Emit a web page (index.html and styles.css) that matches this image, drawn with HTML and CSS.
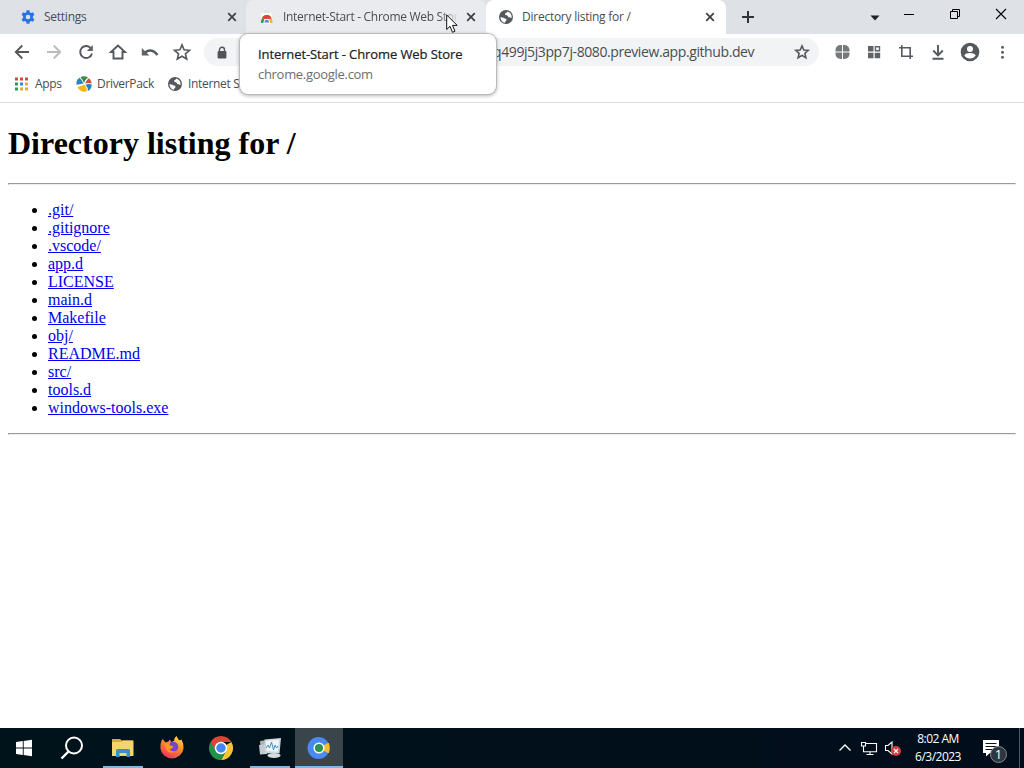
FILE: index.html
```html
<!DOCTYPE html>
<html lang="en">
<head>
    <meta charset="UTF-8">
    <title>Directory listing for /</title>
    <link rel="stylesheet" href="styles.css">
</head>
<body>
    <!-- Tabs -->
    <div class="tab-strip">
        <div class="tab">
            <svg class="favicon" viewBox="0 0 16 16"><path d="M6.600 1.300h2.800l.4 2 1.200.7 1.900-.7 1.500 2.500-1.500 1.400v1.700l1.500 1.400-1.500 2.500-1.900-.7-1.200.7-.4 2H6.600l-.4-2-1.200-.7-1.900.7-1.500-2.500 1.500-1.400V7.200L1.600 5.800l1.500-2.500 1.900.7 1.200-.7z" fill="#2673e6"/><circle cx="8" cy="8" r="2.300" fill="#dee1e6"/></svg>
            <span class="tab-title settings-title">Settings</span>
            <svg class="tab-close" viewBox="0 0 16 16"><path d="M4.200 4.200l7.600 7.600M11.800 4.200l-7.600 7.600"/></svg>
        </div>
        <div class="tab hovered">
            <svg class="favicon" viewBox="0 0 16 16"><path d="M3 4h11v10H3z" fill="#f8f8f8"/><path d="M6.500 4V2h4v2" fill="none" stroke="#dcdcdc"/><path d="M4 9.500q1-3.500 4.800-3.500 3.700 0 4.700 3.500z" fill="#dc4437"/><path d="M3.800 9.500q-1 2-.8 4.500h4.500L6 10z" fill="#2f9e57"/><path d="M13.700 9.500q.9 2 .8 4.500H10l1.500-4z" fill="#f2b82d"/><path d="M4 9.500q1-3.500 4.800-3.500 3.700 0 4.700 3.500L9 10z" fill="#dc4437"/><path d="M5.800 14a3 3.700 0 0 1 6 0z" fill="#4986df" stroke="#fff"/></svg>
            <span class="tab-title store-title">Internet-Start - Chrome Web Store</span>
            <svg class="tab-close" viewBox="0 0 16 16"><path d="M4.200 4.200l7.600 7.600M11.800 4.200l-7.600 7.600"/></svg>
        </div>
        <div class="tab active">
            <svg class="favicon" viewBox="0 0 16 16"><circle cx="8" cy="8" r="7" fill="#55585c"/><path d="M2.400 8.200q2.500 0 3.500.8t2.400.6v2.200q-1.300.6-1.300 1.900-4.300-.6-4.600-5.500zM9 2.400q-.2 1.900-2 2.100-.3 2 2 1.800 1.400.9 1.300 2h1.800q.4 1 1.400.7.800-5-4.500-6.600z" fill="#fff"/></svg>
            <span class="tab-title listing-title">Directory listing for /</span>
            <svg class="tab-close" viewBox="0 0 16 16"><path d="M4.200 4.200l7.600 7.600M11.800 4.200l-7.600 7.600"/></svg>
        </div>
        <svg class="new-tab" viewBox="0 0 16 16"><path d="M8 2v12M2 8h12" stroke="#303236" stroke-width="2"/></svg>
        <div class="window-buttons">
            <svg class="tab-search" viewBox="0 0 10 6"><path d="M.5.500h9L5 5.500z" fill="#202124"/></svg>
            <svg class="win-button" viewBox="0 0 46 28"><path d="M18 14.500h10" stroke="#000"/></svg>
            <svg class="win-button" viewBox="0 0 46 28"><path d="M18.500 11.500h7v7h-7zM20.500 11.500v-2h7v7h-2" fill="none" stroke="#000"/></svg>
            <svg class="win-button" viewBox="0 0 46 28"><path d="M18 9l10 10M28 9L18 19" stroke="#000" stroke-width="1.100"/></svg>
        </div>
    </div>

    <!-- Toolbar -->
    <div class="toolbar">
        <svg class="tool" viewBox="0 0 32 32"><path d="M23 16H10M16.300 9.500L9.800 16l6.500 6.500" class="line"/></svg>
        <svg class="tool disabled" viewBox="0 0 32 32"><path d="M9 16h13M15.700 9.500l6.500 6.500-6.500 6.500" class="line"/></svg>
        <svg class="tool" viewBox="0 0 32 32"><path d="M21.200 12.700A6 6 0 1 0 22 17.500" class="line"/><path d="M22.800 9v6h-6z" class="fill"/></svg>
        <svg class="tool" viewBox="0 0 32 32"><path d="M16 9.500l-7 6.500h2.500v6.500h9V16H23z" class="line"/></svg>
        <svg class="tool" viewBox="0 0 32 32"><path d="M11 16.500q6.500-4.800 12.500 2.500" class="line thick"/><path d="M7.800 12v7.500h7.500z" class="fill"/></svg>
        <svg class="tool" viewBox="0 0 32 32"><path d="M16 8.900l2.100 4.900 5.400.5-4.100 3.500 1.300 5.200-4.700-2.800-4.700 2.800 1.300-5.200-4.100-3.500 5.400-.5z" class="line thin"/></svg>
        <div class="omnibox">
            <svg class="lock" viewBox="0 0 10 13"><path d="M2.500 6V3.700a2.500 2.500 0 0 1 5 0V6" fill="none" stroke="#505357" stroke-width="1.400"/><rect x=".6" y="5" width="8.800" height="7.500" rx="1" fill="#505357"/></svg>
            <span class="url">q499j5j3pp7j-8080.preview.app.github.dev</span>
            <svg class="bookmark-star" viewBox="0 0 32 32"><path d="M16 9.900l1.800 4.100 4.400.4-3.300 3 1 4.400-3.900-2.400-3.900 2.400 1-4.400-3.300-3 4.400-.4z" class="line thin"/></svg>
        </div>
        <svg class="tool" viewBox="0 0 32 32"><rect x="9.500" y="9" width="14" height="14" rx="5" fill="#77787a"/><path d="M16.500 8v16M8 16h17" stroke="#fff" stroke-width="1"/></svg>
        <svg class="tool" viewBox="0 0 32 32"><path d="M10 10h5.500v5.500H10zM10 16.700h5.500v5.500H10zM16.700 16.700h5.500v5.500h-5.500z" class="fill"/><path d="M17.400 10.700h4.100v4.100h-4.100z" fill="none" stroke="#5f6368" stroke-width="1.400"/></svg>
        <svg class="tool" viewBox="0 0 32 32"><path d="M9 11.800h11.200v8.500M11.800 9v11.200H23M20.200 20v3" class="line thin"/></svg>
        <svg class="tool" viewBox="0 0 32 32"><path d="M16 9v10M11.200 14.500L16 19.300l4.800-4.800M10.500 22.700h11" class="line"/></svg>
        <svg class="tool" viewBox="0 0 32 32"><circle cx="16" cy="16" r="9.300" fill="#55585c"/><circle cx="16" cy="13" r="3" fill="#fff"/><path d="M10.300 19.400q1.500-2.300 5.700-2.300t5.700 2.300q-2 3-5.700 3t-5.700-3z" fill="#fff"/></svg>
        <svg class="tool" viewBox="0 0 32 32"><g class="fill"><circle cx="16.500" cy="11.300" r="1.500"/><circle cx="16.500" cy="16.300" r="1.500"/><circle cx="16.500" cy="21.300" r="1.500"/></g></svg>
    </div>

    <!-- Bookmarks -->
    <div class="bookmarks-bar">
        <div class="bookmark apps">
            <svg viewBox="0 0 14 14" width="14" height="14"><path d="M1 .500h3v3H1zM6 .500h3v3H6zM11 .500h3v3h-3z" fill="#d34a3d"/><path d="M1 5.500h3v3H1z" fill="#2f9b55"/><path d="M6 5.500h3v3H6z" fill="#3d83dc"/><path d="M11 5.500h3v3h-3z" fill="#dfae35"/><path d="M1 10.500h3v3H1z" fill="#2f9b55"/><path d="M6 10.500h3v3H6zM11 10.500h3v3h-3z" fill="#dfae35"/></svg>
            <span>Apps</span>
        </div>
        <div class="bookmark driverpack">
            <svg viewBox="0 0 16 16" width="16" height="16"><path d="M7.500 7.500L.6 8.800Q-.2 3.800 3.500 1.800 6 4 7.500 7.500z" fill="#3080c4"/><path d="M8 7Q6.500 3.500 4.500 1.300 8-.8 12 1.500 9 3.500 8 7z" fill="#3b8b42"/><path d="M9 7.500q1-3.500 4-5.300Q15.500 4 15.800 7.500 12 6.300 9 7.500z" fill="#d54d38"/><path d="M9.500 8.800q3-1.300 6.300-.3-.2 4.500-4 6.600.5-3.500-2.300-6.300z" fill="#2b80bd"/><path d="M8.200 8.600q3.300 3.200 2.300 6.900-6 1.500-9.200-4.500 3.500-.3 6.900-2.400z" fill="#f4b90c"/></svg>
            <span>DriverPack</span>
        </div>
        <div class="bookmark internet">
            <svg viewBox="0 0 16 16" width="16" height="16"><circle cx="8" cy="8" r="7" fill="#55585c"/><path d="M2.400 8.200q2.500 0 3.500.8t2.400.6v2.200q-1.300.6-1.300 1.900-4.300-.6-4.600-5.500zM9 2.400q-.2 1.900-2 2.100-.3 2 2 1.800 1.400.9 1.300 2h1.800q.4 1 1.400.7.800-5-4.500-6.600z" fill="#fff"/></svg>
            <span>Internet S</span>
        </div>
    </div>

    <!-- Page -->
    <main class="page">
        <h1>Directory listing for /</h1>
        <hr>
        <ul>
            <li><a href="#">.git/</a></li>
            <li><a href="#">.gitignore</a></li>
            <li><a href="#">.vscode/</a></li>
            <li><a href="#">app.d</a></li>
            <li><a href="#">LICENSE</a></li>
            <li><a href="#">main.d</a></li>
            <li><a href="#">Makefile</a></li>
            <li><a href="#">obj/</a></li>
            <li><a href="#">README.md</a></li>
            <li><a href="#">src/</a></li>
            <li><a href="#">tools.d</a></li>
            <li><a href="#">windows-tools.exe</a></li>
        </ul>
        <hr>
    </main>

    <!-- Taskbar -->
    <div class="taskbar">
        <div class="task"><svg viewBox="0 0 48 40"><path d="M16 14l6.800-1v6.500H16zM23.700 12.900L32 11.700v7.800h-8.300zM16 20.400h6.800V27L16 26zM23.700 20.400H32v7.900l-8.300-1.200z" fill="#fff"/></svg></div>
        <div class="task search"><svg viewBox="0 0 48 40"><circle cx="26" cy="17.500" r="8" fill="none" stroke="#fff" stroke-width="2"/><path d="M20.500 23.500l-7 7" stroke="#fff" stroke-width="2.400"/></svg></div>
        <div class="task running"><svg viewBox="0 0 48 40"><path d="M13 11h8l2 1.500h10.500V27H13z" fill="#dfa83c"/><path d="M13 14h9l2-1.500h10.500V28H13z" fill="#f5d36d"/><path d="M17 29v-6.500q0-1.500 1.500-1.500h11q1.500 0 1.500 1.500V29h-3.500v-4h-7v4z" fill="#3c8fc4"/></svg></div>
        <div class="task">
            <svg viewBox="0 0 48 40">
                <defs><linearGradient id="fox" x1=".8" y1="0" x2=".3" y2="1"><stop offset="0" stop-color="#ffe14a"/><stop offset=".45" stop-color="#ff8a2a"/><stop offset="1" stop-color="#f12d60"/></linearGradient></defs>
                <path d="M15 11.500l2.500 3 3-1 1.500-2 1 2.500 3-1q0-3.500 2.500-5 1 3 3.500 4.500l1.500-1q2.300 4 2 9a11.600 11 0 0 1-23.100 0q-.2-5 1.600-9z" fill="url(#fox)"/>
                <path d="M22 14.500q5-2 7.500 1.500 2 4-1 6.500-4 2-7-1l2-1q2-1 1-2.500l-3-.500z" fill="#7446c8"/><path d="M16.500 15l4 1 2 2 3 .5-2 2-2 1q1 2 5 2-5 3-8-1.500-2-4-2-7z" fill="#ff9529"/>
            </svg>
        </div>
        <div class="task"><svg viewBox="0 0 48 40"><path d="M24 20v12A12 12 0 0 1 13.600 14z" fill="#23914b"/><path d="M24 20l10.400-6A12 12 0 0 1 24 32l5-9z" fill="#fac431"/><path d="M13.600 14l5.300 9L24 14h10.400a12 12 0 0 0-20.800 0z" fill="#df4336"/><path d="M18.800 23L24 32l5.200-9z" fill="#23914b"/><circle cx="24" cy="20" r="5.500" fill="#4286f5" stroke="#fff" stroke-width="1.500"/></svg></div>
        <div class="task running"><svg viewBox="0 0 48 40"><path d="M14 13l10-1.500V25l-9 1z" fill="#aab3b7"/><path d="M13 17l8-1v10l-7 .5z" fill="#c4cbce"/><path d="M18.500 11.500L35 10l-1.500 15.500-14.500-.5z" fill="#cfd8dc"/><path d="M20 13l13-1.200-1.200 12L20.500 23z" fill="#eef5f8"/><path d="M20 20l2-3 1.500 3 2-6 2 8 1.500-5 1.500 3 1.500-2" fill="none" stroke="#4790b9"/><ellipse cx="28" cy="27.500" rx="6.500" ry="2.500" fill="#d5dadc"/></svg></div>
        <div class="task current"><svg viewBox="0 0 48 40"><circle cx="23.500" cy="20" r="11" fill="#4a8af0"/><path d="M24 20l9-5h1q.6 2.500.6 5t-.6 5h-1z" fill="#f7bb37"/><circle cx="24" cy="20" r="4.800" fill="#2b9350" stroke="#fff" stroke-width="1.500"/></svg></div>
        <div class="tray">
            <svg class="chevron" viewBox="0 0 14 14"><path d="M1.500 9.500L7 4l5.500 5.500" fill="none" stroke="#fff" stroke-width="1.300"/></svg>
            <svg class="network" viewBox="0 0 18 16"><path d="M5 3.500h11.500v8.300H3.500V6M10 12v2.500M6.500 14.500h7M1.500 2.500h4v3.500h-4z" fill="none" stroke="#fff" stroke-width="1.100"/></svg>
            <svg class="volume" viewBox="0 0 18 16"><path d="M1.500 5.500h2.500l4-3.500v12l-4-3.500H1.500z" fill="none" stroke="#fff" stroke-width="1.100"/><circle cx="12" cy="11" r="5" fill="#d43f3f"/><path d="M10 9l4 4M14 9l-4 4" stroke="#fff" stroke-width="1.100"/></svg>
            <div class="clock"><span class="time">8:02 AM</span><span class="date">6/3/2023</span></div>
            <div class="notifications">
                <svg viewBox="0 0 18 18"><path d="M1 1h16v13H8l-4 3.500V14H1z" fill="#fff"/><path d="M3.500 4.500h11M3.500 7.500h11M3.500 10.500h8" stroke="#09121c"/></svg>
                <span class="count">1</span>
            </div>
        </div>
    </div>

    <div class="tab-tooltip">
        <div class="tooltip-title">Internet-Start - Chrome Web Store</div>
        <div class="tooltip-url">chrome.google.com</div>
    </div>
    <svg class="cursor" viewBox="0 0 12 20"><path d="M.7 1v14.500l3.300-3.200 2.500 6 2.500-1.100-2.500-5.800h4.700z" fill="#fff" stroke="#111"/></svg>
</body>
</html>
```
FILE: styles.css
```css
body {
    margin: 0;
    height: 768px;
    display: flex;
    flex-direction: column;
    overflow: hidden;
    background: #fff;
    font-family: "Open Sans", "Noto Sans", sans-serif;
    font-size: 12px;
    color: #4a4d51;
}

svg {
    flex: none;
    display: block;
}

/* Tabs */
.tab-strip {
    height: 34px;
    display: flex;
    background: #dee1e6;
}

.tab {
    width: 240px;
    height: 34px;
    box-sizing: border-box;
    display: flex;
    align-items: center;
    padding: 0 8px 0 12px;
}

.tab:first-child {
    width: 246px;
    padding-left: 20px;
    padding-right: 6px;
}

.tab.hovered {
    padding-right: 7px;
    background: #e9ebee;
    border-radius: 8px 8px 0 0;
}

.tab.active {
    background: #fff;
    border-radius: 8px 8px 0 0;
}

.favicon {
    width: 16px;
    height: 16px;
}

.tab-title {
    flex: 1;
    margin-left: 8px;
    line-height: 34px;
    white-space: nowrap;
    overflow: hidden;
    letter-spacing: -0.25px;
}

/* The title fades out before the close button */
.hovered .tab-title {
    margin-left: 9px;
    margin-right: 6px;
    letter-spacing: -0.3px;
    -webkit-mask-image: linear-gradient(to right, #000 155px, transparent 176px);
}

.tab-close {
    width: 16px;
    height: 16px;
    stroke: #3c4043;
    stroke-width: 1.7;
}

.new-tab {
    width: 16px;
    margin-left: 14px;
}

.window-buttons {
    margin-left: auto;
    display: flex;
    align-items: flex-start;
}

.tab-search {
    width: 10px;
    height: 6px;
    margin: 15px 6px 0 0;
}

.win-button {
    width: 46px;
    height: 28px;
}

/* Toolbar */
.toolbar {
    height: 36px;
    display: flex;
    align-items: center;
    padding: 0 6px;
}

.tool {
    width: 32px;
    height: 32px;
}

.line {
    fill: none;
    stroke: #55585c;
    stroke-width: 1.9;
}

.thin {
    stroke-width: 1.6;
}

.thick {
    stroke-width: 2.4;
}

.disabled .line {
    stroke: #babcbe;
}

.fill {
    fill: #5f6368;
}

.omnibox {
    flex: 1;
    height: 28px;
    margin: 0 7px 0 6px;
    display: flex;
    align-items: center;
    border-radius: 14px;
    background: #f1f3f4;
}

.lock {
    width: 10px;
    height: 13px;
    margin-left: 13px;
}

.url {
    flex: 1;
    margin-left: 266px;
    margin-bottom: 1px;
    font-size: 14px;
    letter-spacing: -0.4px;
    white-space: nowrap;
}

.bookmark-star {
    width: 32px;
    height: 32px;
    margin-right: 1px;
}

/* Bookmarks */
.bookmarks-bar {
    height: 32px;
    display: flex;
    align-items: center;
    padding-left: 14px;
    border-bottom: 1px solid #dcdee0;
    letter-spacing: -0.33px;
}

.bookmark {
    height: 28px;
    margin-bottom: 5px;
    display: flex;
    align-items: center;
    gap: 5px;
}

.apps {
    width: 62px;
    gap: 7px;
}

.driverpack {
    width: 91px;
}

/* Page */
.page {
    flex: 1;
    padding: 0 8px;
    color: #000;
    font-family: "Liberation Serif", "Times New Roman", serif;
    font-size: 16px;
    line-height: 18px;
}

.page h1 {
    margin: 21px 0;
    font-size: 32px;
    line-height: 38px;
}

.page hr {
    margin: 0;
}

.page ul {
    margin: 16px 0;
}

.page a {
    color: #0000ee;
}

/* Taskbar */
.taskbar {
    height: 40px;
    display: flex;
    background: linear-gradient(to right, #00131b, #020d1b);
    color: #fff;
}

.task {
    width: 48px;
    height: 40px;
    margin-right: 1px;
    display: flex;
    justify-content: center;
}

.task:first-child {
    margin-right: 0;
}

.task.search {
    margin-right: 3px;
}

.task svg {
    width: 48px;
    height: 40px;
}

.task.running {
    background: linear-gradient(#76b9ed, #76b9ed) center bottom / 40px 2px no-repeat;
}

.task.current {
    background: #39444b;
    box-shadow: inset 0 -2px #76b9ed;
}

.tray {
    margin-left: auto;
    display: flex;
    align-items: center;
}

.chevron {
    width: 14px;
    height: 14px;
    margin-right: 8px;
}

.network {
    width: 18px;
    height: 16px;
    margin-right: 6px;
}

.volume {
    width: 18px;
    height: 16px;
}

.clock {
    width: 72px;
    padding-right: 8px;
    display: flex;
    flex-direction: column;
    align-items: center;
    line-height: 18px;
    letter-spacing: -0.5px;
}

.notifications {
    position: relative;
    width: 37px;
    height: 40px;
    margin-right: 4px;
    border-right: 1px solid #4e5962;
}

.notifications svg {
    width: 18px;
    height: 18px;
    margin-top: 11px;
}

/* Badge over the notification icon */
.count {
    position: absolute;
    left: 8px;
    top: 18px;
    width: 15px;
    height: 15px;
    border: 1px solid #818890;
    border-radius: 50%;
    background: #303640;
    text-align: center;
    font-size: 13px;
    line-height: 15px;
}

/* Tab hover card */
.tab-tooltip {
    position: absolute;
    left: 240px;
    top: 34px;
    width: 238px;
    height: 60px;
    padding-left: 18px;
    background: #fff;
    border-radius: 8px;
    box-shadow: 0 0 0 1px #b9bbbd, 0 1px 4px rgba(0, 0, 0, 0.45);
    font-size: 13px;
    white-space: nowrap;
}

.tooltip-title {
    margin-top: 10px;
    line-height: 20px;
    font-weight: 500;
    color: #202124;
    letter-spacing: -0.1px;
    -webkit-text-stroke: 0.2px #202124;
}

.tooltip-url {
    line-height: 20px;
    color: #6b6f74;
    letter-spacing: -0.3px;
}

.cursor {
    position: absolute;
    left: 446px;
    top: 14px;
    width: 12px;
    height: 20px;
}
```
